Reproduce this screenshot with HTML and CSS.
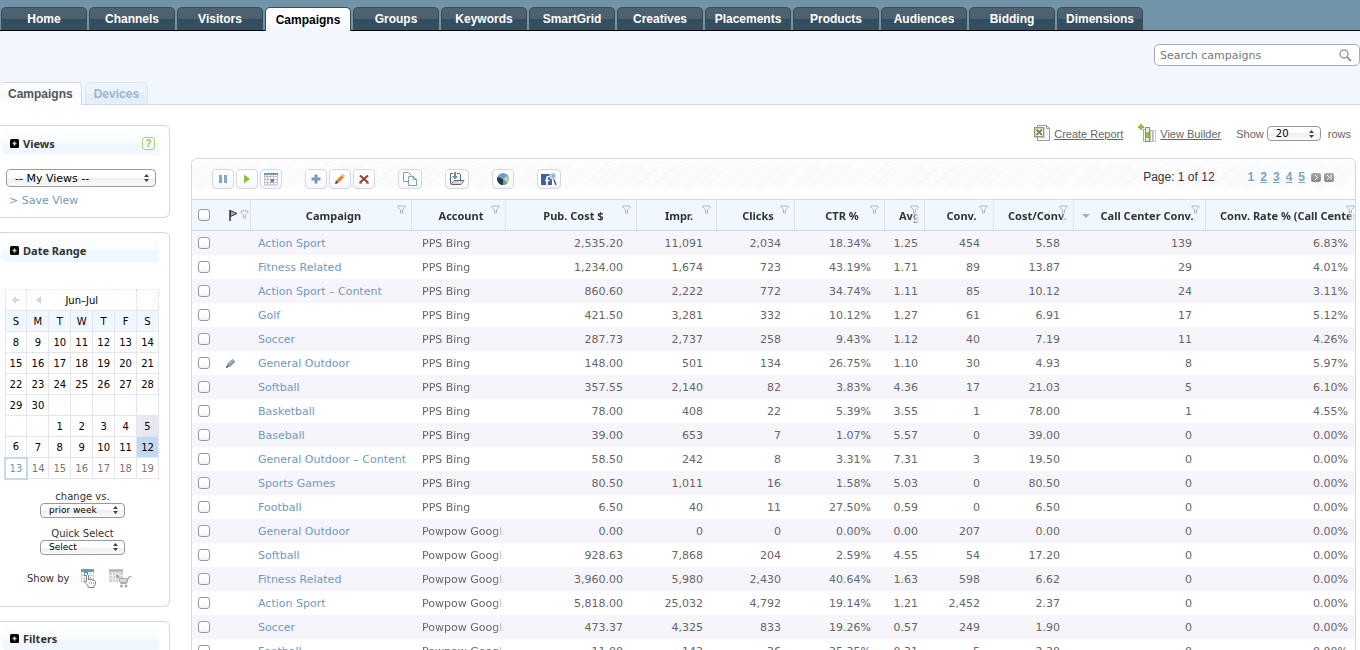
FILE: index.html
```html
<!DOCTYPE html>
<html lang="en">
<head>
    <meta charset="UTF-8">
    <meta name="viewport" content="width=device-width, initial-scale=1.0">
    <title>Campaigns</title>
    <link rel="stylesheet" href="styles.css">
</head>
<body>

    <!-- shared icons -->
    <svg class="sprite" aria-hidden="true">
        <symbol id="funnel" viewBox="0 0 9 9">
            <path d="M1 1h7v1.200L5.500 4.800v3.200h-2V4.800L1 2.200z" fill="#f8faff" stroke="#a9b5cb"/>
        </symbol>
        <symbol id="toggle" viewBox="0 0 9 9">
            <rect width="9" height="9" rx="1.500" fill="#000"/>
            <path d="M4.500 2.500v4M2.500 4.500h4" stroke="#c3d69a" stroke-width="1.600"/>
        </symbol>
    </svg>

    <nav class="main-nav">
        <a href="#">Home</a>
        <a href="#">Channels</a>
        <a href="#">Visitors</a>
        <a href="#" class="active">Campaigns</a>
        <a href="#">Groups</a>
        <a href="#">Keywords</a>
        <a href="#">SmartGrid</a>
        <a href="#">Creatives</a>
        <a href="#">Placements</a>
        <a href="#">Products</a>
        <a href="#">Audiences</a>
        <a href="#">Bidding</a>
        <a href="#">Dimensions</a>
    </nav>

    <header class="sub-header">
        <form class="search">
            <input type="text" placeholder="Search campaigns" aria-label="Search campaigns">
            <button type="button" aria-label="Search">
                <svg width="13" height="13" viewBox="0 0 13 13"><circle cx="5" cy="5" r="4" fill="none" stroke="#999" stroke-width="1.400"/><path d="M8 8l4 4" stroke="#999" stroke-width="2"/></svg>
            </button>
        </form>
        <nav class="sub-nav">
            <a href="#" class="active">Campaigns</a>
            <a href="#">Devices</a>
        </nav>
    </header>

    <div class="layout">
        <aside class="sidebar">
            <section class="panel">
                <h2><svg width="9" height="9"><use href="#toggle"/></svg>Views
                    <button type="button" class="help" aria-label="Help">?</button>
                </h2>
                <div class="views-body">
                    <select class="views-select" aria-label="Views"><option>-- My Views --</option></select>
                    <a href="#">&gt; Save View</a>
                </div>
            </section>

            <section class="panel">
                <h2><svg width="9" height="9"><use href="#toggle"/></svg>Date Range</h2>
                <table class="calendar">
                    <thead>
                        <tr class="month">
                            <td><button type="button" aria-label="Previous year"><svg width="7" height="8" viewBox="0 0 7 8"><path d="M4 0v3h3v2H4v3L0 4z" fill="#c1daf0"/></svg></button></td>
                            <td><button type="button" aria-label="Previous month"><svg width="5" height="8" viewBox="0 0 5 8"><path d="M5 0v8L0 4z" fill="#c1daf0"/></svg></button></td>
                            <td colspan="3">Jun–Jul</td>
                            <td></td>
                            <td></td>
                        </tr>
                        <tr><th>S</th><th>M</th><th>T</th><th>W</th><th>T</th><th>F</th><th>S</th></tr>
                    </thead>
                    <tbody>
                        <tr><td>8</td><td>9</td><td>10</td><td>11</td><td>12</td><td>13</td><td>14</td></tr>
                        <tr><td>15</td><td>16</td><td>17</td><td>18</td><td>19</td><td>20</td><td>21</td></tr>
                        <tr><td>22</td><td>23</td><td>24</td><td>25</td><td>26</td><td>27</td><td>28</td></tr>
                        <tr><td>29</td><td>30</td><td></td><td></td><td></td><td></td><td></td></tr>
                        <tr><td></td><td></td><td>1</td><td>2</td><td>3</td><td>4</td><td class="prior">5</td></tr>
                        <tr><td>6</td><td>7</td><td>8</td><td>9</td><td>10</td><td>11</td><td class="selected">12</td></tr>
                        <tr class="future"><td class="today">13</td><td>14</td><td>15</td><td>16</td><td>17</td><td>18</td><td>19</td></tr>
                    </tbody>
                </table>
                <div class="range-field">
                    <label for="compare">change vs.</label>
                    <select id="compare"><option>prior week</option></select>
                </div>
                <div class="range-field">
                    <label for="quick">Quick Select</label>
                    <select id="quick"><option>Select</option></select>
                </div>
                <div class="show-by">
                    <span>Show by</span>
                    <button type="button" aria-label="Show by click date">
                        <svg width="16" height="19" viewBox="0 0 16 19">
                            <rect x="0" y="0" width="13" height="3" fill="#7199b5"/>
                            <path d="M.5 3v10h12V3M.5 6.500h12M.5 9.500h12M3.500 3v10M6.500 3v10M9.500 3v10" fill="none" stroke="#cfd2e0"/>
                            <rect x="3.500" y="3.500" width="3" height="3" fill="#fff" stroke="#5c8db0"/>
                            <path d="M5.500 6.500c0-1.300 2-1.300 2 0V11l1-.8 1.300.6 1.200-.2 1 .8 1.500 0 1 1v2.600l-1.500 2v1.500H7.500L6.500 16 3.500 13c-.4-1 .6-1.500 1.300-.9l.7.7z" fill="#fff" stroke="#777" stroke-width=".9"/>
                            <path d="M8.500 13v2M10.500 13v2M12.500 13v2" stroke="#999" stroke-width=".8"/>
                        </svg>
                    </button>
                    <button type="button" aria-label="Show by purchase date">
                        <svg width="23" height="19" viewBox="0 0 23 19">
                            <rect x="0" y="0" width="14" height="3" fill="#bbb"/>
                            <rect x="0" y="3" width="14" height="10" fill="#d3d3de"/>
                            <path d="M0 6.500h14M0 9.500h14M3.500 3v10M6.500 3v10M9.500 3v10" stroke="#eeeef4"/>
                            <rect x="7" y="6" width="3" height="3" fill="#a5a5a8"/>
                            <path d="M22.500 7.500h-2.500l-2.500 7h-6M10 9.500h9l-1.500 4h-6.300z" fill="#d5d5de" stroke="#aaa"/>
                            <circle cx="12.500" cy="17" r="1.500" fill="#aaa"/><circle cx="17" cy="17" r="1.500" fill="#aaa"/>
                        </svg>
                    </button>
                </div>
            </section>

            <section class="panel">
                <h2><svg width="9" height="9"><use href="#toggle"/></svg>Filters</h2>
            </section>
        </aside>

        <main class="content">
            <div class="actions">
                <a href="#">
                    <svg width="16" height="17" viewBox="0 0 16 17">
                        <path d="M3.500.5h9l3 3v12h-12z" fill="#fff" stroke="#999"/><path d="M12.500.5v3h3" fill="none" stroke="#999"/>
                        <path d="M12 6h2M12 8h2M12 10h2M6 13h8" stroke="#dcdce6"/>
                        <rect x=".7" y="2.700" width="9" height="9" fill="#fff" stroke="#8aa06c" stroke-width="1.400"/>
                        <path d="M2.500 4.500l5.500 5.500M8 4.500L2.500 10" stroke="#6f8a55" stroke-width="1.800"/>
                    </svg><span>Create Report</span>
                </a>
                <a href="#">
                    <svg width="18" height="19" viewBox="0 0 18 19">
                        <path d="M3 0v6M0 3h6" stroke="#8fc043" stroke-width="2.400"/>
                        <rect x="5.500" y="5.500" width="2" height="12" fill="#fff" stroke="#aaa"/>
                        <rect x="7.500" y="3.500" width="4" height="14" fill="#e6edda" stroke="#8b9579"/>
                        <rect x="8" y="8" width="3" height="6" fill="#8fc043"/>
                        <rect x="12.500" y="6.500" width="2" height="11" fill="#fff" stroke="#bbb"/>
                        <rect x="15.500" y="6.500" width="2" height="11" fill="#fff" stroke="#c8c8d4"/>
                    </svg><span>View Builder</span>
                </a>
                <div class="row-count">
                    <label for="rows">Show</label>
                    <select id="rows"><option>20</option></select>
                    <span>rows</span>
                </div>
            </div>

            <div class="grid">
                <div class="toolbar">
                    <div class="tool-group">
                        <button type="button" aria-label="Pause"><svg width="14" height="14" viewBox="0 0 14 14"><path d="M3 3h3v8H3zM8 3h3v8H8z" fill="#7faac9"/></svg></button>
                        <button type="button" aria-label="Activate"><svg width="14" height="14" viewBox="0 0 14 14"><path d="M4 2.500v9L10 7z" fill="#8fc043"/></svg></button>
                        <button type="button" aria-label="Schedule"><svg width="14" height="14" viewBox="0 0 14 14"><path d="M.5 2v11h13V2M.5 4.500h13M.5 7.500h13M.5 10.500h13M3.500 2v11M6.500 2v11M9.500 2v11" fill="none" stroke="#bfbfca"/><path d="M0 1h14v2H0z" fill="#7199b5"/><path d="M7 7h3v3H7z" fill="#4c8dbd"/></svg></button>
                    </div>
                    <div class="tool-group">
                        <button type="button" aria-label="Add"><svg width="14" height="14" viewBox="0 0 14 14"><path d="M7 2.500v9M2.500 7h9" stroke="#7199b9" stroke-width="3"/></svg></button>
                        <button type="button" aria-label="Edit"><svg width="14" height="14" viewBox="0 0 14 14"><path d="M2 12l1-3.500 2.500 2.500z" fill="#333"/><path d="M3 8.500L8.500 3 11 5.500 5.500 11z" fill="#f2913d"/><path d="M5 9.500L10 4.500" stroke="#c7622a"/><path d="M8.500 3L10 1.500 12.500 4 11 5.500z" fill="#d4cbd0"/></svg></button>
                        <button type="button" aria-label="Delete"><svg width="14" height="14" viewBox="0 0 14 14"><path d="M3 3.500l8 7M11 3.500l-8 7" stroke="#94452c" stroke-width="2.200"/><path d="M2 11h3M9 11h3" stroke="#94452c"/></svg></button>
                    </div>
                    <div class="tool-group">
                        <button type="button" aria-label="Copy"><svg width="16" height="14" viewBox="0 0 16 14"><path d="M1.500.500h5l3 3v6h-8z" fill="#fff" stroke="#7ba3c0"/><path d="M6.500 4.500h5l3 3v6h-8z" fill="#fff" stroke="#7ba3c0"/><path d="M11.500 4.500v3h3" fill="none" stroke="#7ba3c0"/></svg></button>
                    </div>
                    <div class="tool-group">
                        <button type="button" aria-label="Import"><svg width="16" height="14" viewBox="0 0 16 14"><path d="M4 1.500H1.500v10l1 1h9.500l3-4H5l-3 4M8 1.500h2.500l1 1.500v5" fill="none" stroke="#666"/><path d="M5 9h9l-2 3H3z" fill="#d5d5db"/><path d="M6 0v5" stroke="#5c94b8" stroke-width="2"/><path d="M3 4h6L6 7.500z" fill="#5c94b8"/></svg></button>
                    </div>
                    <div class="tool-group">
                        <button type="button" aria-label="Chart"><svg width="14" height="14" viewBox="0 0 14 14"><circle cx="7" cy="7" r="6" fill="#6d9fc4"/><path d="M7 7L1.500 5A6 6 0 0 0 7 13z" fill="#243d4c"/><path d="M7 7v6a6 6 0 0 0 6-6L11 4z" fill="#c0cfa0"/><path d="M7 7v6a6 6 0 0 0 4.500-2z" fill="#6d9c87"/></svg></button>
                    </div>
                    <div class="tool-group">
                        <button type="button" aria-label="Publish"><svg width="16" height="14" viewBox="0 0 16 14"><path d="M0 2h11v11H0z" fill="#43609c"/><path d="M8.500 4.500H7.300C6.300 4.500 6 5 6 6v7M4 8.500h4.500" fill="none" stroke="#fff" stroke-width="1.700"/><path d="M12 5l3 8" stroke="#555" stroke-width="1.400"/><circle cx="12" cy="4" r="3.500" fill="#e6f0f9"/><path d="M12 1v6M9.400 2.500l5.200 3M9.400 5.500l5.200-3" stroke="#78a5c9"/></svg></button>
                    </div>
                    <div class="pager">
                        <span class="page-label">Page: 1 of 12</span>
                        <b>1</b>
                        <a href="#">2</a>
                        <a href="#">3</a>
                        <a href="#">4</a>
                        <a href="#">5</a>
                        <button type="button" aria-label="Next page"><svg width="10" height="9" viewBox="0 0 10 9"><path d="M4 2l2.500 2.500L4 7" fill="none" stroke="#fff"/></svg></button>
                        <button type="button" aria-label="Last page"><svg width="10" height="9" viewBox="0 0 10 9"><path d="M3 2l2.500 2.500L3 7M7 2v5" fill="none" stroke="#fff"/></svg></button>
                    </div>
                </div>

                <table class="data">
                    <colgroup>
                        <col class="w-check"><col class="w-flag"><col class="w-name"><col class="w-account"><col class="w-cost"><col class="w-impr"><col class="w-clicks"><col class="w-ctr"><col class="w-avg"><col class="w-conv"><col class="w-cpc"><col class="w-calls"><col>
                    </colgroup>
                    <thead>
                        <tr>
                            <th class="check"><input type="checkbox" aria-label="Select all"></th>
                            <th class="flag"><svg width="9" height="12" viewBox="0 0 9 12"><path d="M1 1v11" stroke="#222" stroke-width="1.400"/><path d="M1.500 1.500L8 4.500 1.500 7.500z" fill="#9bb0c0" stroke="#333"/></svg><svg width="9" height="9"><use href="#funnel"/></svg></th>
                            <th><div>Campaign</div><svg class="funnel"><use href="#funnel"/></svg></th>
                            <th><div>Account</div><svg class="funnel"><use href="#funnel"/></svg></th>
                            <th><div>Pub. Cost $</div><svg class="funnel"><use href="#funnel"/></svg></th>
                            <th><div>Impr.</div><svg class="funnel"><use href="#funnel"/></svg></th>
                            <th><div>Clicks</div><svg class="funnel"><use href="#funnel"/></svg></th>
                            <th><div>CTR %</div><svg class="funnel"><use href="#funnel"/></svg></th>
                            <th class="clipped"><div>Avg.</div><svg class="funnel"><use href="#funnel"/></svg></th>
                            <th><div>Conv.</div><svg class="funnel"><use href="#funnel"/></svg></th>
                            <th class="clipped"><div>Cost/Conv.</div><svg class="funnel"><use href="#funnel"/></svg></th>
                            <th class="sorted"><div>Call Center Conv.</div><svg class="funnel"><use href="#funnel"/></svg></th>
                            <th class="clipped last"><div>Conv. Rate % (Call Center)</div><svg class="funnel"><use href="#funnel"/></svg></th>
                        </tr>
                    </thead>
                    <tbody id="campaignRows"></tbody>
                </table>
            </div>
        </main>
    </div>

    <script>
        // name, account, cost, impr, clicks, ctr, avg cpc, conv, cost/conv, call conv, conv rate
        const campaigns = [
            ['Action Sport', 'PPS Bing', '2,535.20', '11,091', '2,034', '18.34%', '1.25', '454', '5.58', '139', '6.83%'],
            ['Fitness Related', 'PPS Bing', '1,234.00', '1,674', '723', '43.19%', '1.71', '89', '13.87', '29', '4.01%'],
            ['Action Sport – Content', 'PPS Bing', '860.60', '2,222', '772', '34.74%', '1.11', '85', '10.12', '24', '3.11%'],
            ['Golf', 'PPS Bing', '421.50', '3,281', '332', '10.12%', '1.27', '61', '6.91', '17', '5.12%'],
            ['Soccer', 'PPS Bing', '287.73', '2,737', '258', '9.43%', '1.12', '40', '7.19', '11', '4.26%'],
            ['General Outdoor', 'PPS Bing', '148.00', '501', '134', '26.75%', '1.10', '30', '4.93', '8', '5.97%'],
            ['Softball', 'PPS Bing', '357.55', '2,140', '82', '3.83%', '4.36', '17', '21.03', '5', '6.10%'],
            ['Basketball', 'PPS Bing', '78.00', '408', '22', '5.39%', '3.55', '1', '78.00', '1', '4.55%'],
            ['Baseball', 'PPS Bing', '39.00', '653', '7', '1.07%', '5.57', '0', '39.00', '0', '0.00%'],
            ['General Outdoor – Content', 'PPS Bing', '58.50', '242', '8', '3.31%', '7.31', '3', '19.50', '0', '0.00%'],
            ['Sports Games', 'PPS Bing', '80.50', '1,011', '16', '1.58%', '5.03', '0', '80.50', '0', '0.00%'],
            ['Football', 'PPS Bing', '6.50', '40', '11', '27.50%', '0.59', '0', '6.50', '0', '0.00%'],
            ['General Outdoor', 'Powpow Google', '0.00', '0', '0', '0.00%', '0.00', '207', '0.00', '0', '0.00%'],
            ['Softball', 'Powpow Google', '928.63', '7,868', '204', '2.59%', '4.55', '54', '17.20', '0', '0.00%'],
            ['Fitness Related', 'Powpow Google', '3,960.00', '5,980', '2,430', '40.64%', '1.63', '598', '6.62', '0', '0.00%'],
            ['Action Sport', 'Powpow Google', '5,818.00', '25,032', '4,792', '19.14%', '1.21', '2,452', '2.37', '0', '0.00%'],
            ['Soccer', 'Powpow Google', '473.37', '4,325', '833', '19.26%', '0.57', '249', '1.90', '0', '0.00%'],
            ['Football', 'Powpow Google', '11.00', '142', '36', '25.35%', '0.31', '5', '2.20', '0', '0.00%']
        ];
        const edited = 5;
        const pencil = '<svg width="10" height="10" viewBox="0 0 10 10"><path d="M.5 9.500l1-4L6.500 1l3 2.500L4.500 8.500z" fill="#8296a8"/><path d="M2.500 6.500L7 2.500" stroke="#bccbd8"/><path d="M0 10l.8-2.500 1.700 1.500z" fill="#333"/></svg>';

        document.getElementById('campaignRows').innerHTML = campaigns.map((row, i) => {
            const [name, account, ...numbers] = row;
            return `
                <tr>
                    <td class="check"><input type="checkbox" aria-label="Select ${name}"></td>
                    <td class="flag">${i === edited ? pencil : ''}</td>
                    <td class="name"><a href="#">${name}</a></td>
                    <td class="account"><div>${account}</div></td>
                    ${numbers.map(n => `<td class="num">${n}</td>`).join('')}
                </tr>
            `;
        }).join('');
    </script>

</body>
</html>
```
FILE: styles.css
```css
* {
    box-sizing: border-box;
}
body {
    margin: 0;
    height: 100vh;
    overflow: hidden;
    background-color: #fff;
    color: #666;
    font-family: "DejaVu Sans", sans-serif;
    font-size: 11px;
}
a {
    color: #7199bd;
    text-decoration: none;
}
button {
    padding: 0;
    border: none;
    background: none;
    cursor: pointer;
}
svg {
    display: block;
    flex-shrink: 0;
}
.sprite {
    position: absolute;
    width: 0;
    height: 0;
}

/* selects */
select {
    appearance: none;
    height: 15px;
    padding: 0 8px;
    border: 1px solid #999;
    border-radius: 4px;
    background: url("data:image/svg+xml,%3Csvg xmlns='http://www.w3.org/2000/svg' width='5' height='8'%3E%3Cpath d='M0 3L2.500 0 5 3zM0 5h5L2.500 8z' fill='%23444'/%3E%3C/svg%3E") no-repeat right 6px center, linear-gradient(#fff 50%, #efeff4 50%, #fafafc);
    color: #000;
    font-family: inherit;
    font-size: 9px;
}

/* top navigation */
.main-nav {
    display: flex;
    gap: 2px;
    height: 31px;
    padding: 7px 0 0 1px;
    border-bottom: 1px solid #000;
    background-color: #7093a8;
    font: bold 12px "Liberation Sans", Arial, sans-serif;
}
.main-nav a {
    width: 86px;
    height: 23px;
    border: 1px solid #38515f;
    border-bottom: none;
    border-radius: 5px 5px 0 0;
    background: linear-gradient(#4f6271, #4b606e 50%, #354e5e 50%, #364f5e);
    color: #fff;
    line-height: 22px;
    text-align: center;
}
.main-nav a.active {
    height: 24px;
    background: linear-gradient(#fff 50%, #f1f6ff);
    color: #000;
    line-height: 24px;
}

/* light strip under the navigation */
.sub-header {
    display: flex;
    flex-direction: column;
    justify-content: space-between;
    height: 74px;
    padding-top: 13px;
    border-bottom: 1px solid #d6d6e3;
    background-color: #f1f6ff;
}
.search {
    display: flex;
    align-items: center;
    align-self: flex-end;
    width: 206px;
    height: 22px;
    padding: 0 7px 0 5px;
    border: 1px solid #aaaab4;
    border-radius: 5px;
    background-color: #fff;
}
.search input {
    flex: 1;
    min-width: 0;
    padding: 0;
    border: none;
    outline: none;
    font: 11px "DejaVu Sans", sans-serif;
}
.search input::placeholder {
    color: #777;
}
.sub-nav {
    display: flex;
    gap: 3px;
    margin-bottom: -1px;
    font: bold 12px "Liberation Sans", Arial, sans-serif;
}
.sub-nav a {
    height: 22px;
    padding: 0 8px;
    border: 1px solid #dfe6f3;
    border-bottom: none;
    border-radius: 5px 5px 0 0;
    background: linear-gradient(#ecf4fd 50%, #e2effc 50%);
    color: #a3b5c8;
    line-height: 22px;
}
.sub-nav a.active {
    height: 23px;
    border-color: #d6d6e3;
    border-left: none;
    background: linear-gradient(#fff, #f8fafe 50%, #fff);
    color: #555;
}

/* page columns */
.layout {
    display: flex;
    gap: 21px;
    padding-right: 4px;
}
.sidebar {
    display: flex;
    flex-direction: column;
    gap: 14px;
    width: 170px;
    flex-shrink: 0;
    padding-top: 20px;
}
.content {
    flex: 1;
    min-width: 0;
}

/* sidebar panels */
.panel {
    padding: 5px 10px 18px 2px;
    border: 1px solid #d6d6e3;
    border-left: none;
    border-radius: 0 6px 6px 0;
}
.panel h2 {
    display: flex;
    align-items: center;
    gap: 4px;
    height: 24px;
    margin: 0;
    padding: 0 4px 0 8px;
    border-radius: 6px 0 0 6px;
    background: linear-gradient(#fbfdff 50%, #f0f7ff 50%);
    color: #333;
    font: bold 11px "Noto Sans", sans-serif;
}
.help {
    width: 13px;
    height: 13px;
    margin-left: auto;
    border: 1px solid #b2cc84;
    border-radius: 3px;
    color: #a3c26c;
    font: bold 10px "Liberation Sans", Arial, sans-serif;
    line-height: 11px;
}
.views-body {
    display: flex;
    flex-direction: column;
    align-items: flex-start;
    gap: 6px;
    padding: 14px 0 0 4px;
}
.views-body a {
    padding-left: 3px;
    line-height: 16px;
}
.panel:first-child {
    padding-bottom: 8px;
}
.views-select {
    width: 150px;
    height: 18px;
    font-size: 11px;
}

/* calendar */
.calendar {
    width: 155px;
    margin: 27px 0 11px 2px;
    border-collapse: collapse;
    table-layout: fixed;
    color: #000;
    font-size: 10px;
    text-align: center;
}
.calendar td, .calendar th {
    height: 21px;
    padding: 0;
    border: 1px solid #e5e5f0;
    font-weight: normal;
}
.calendar th {
    background-color: #f0f7ff;
}
.calendar .month td {
    border-style: dotted;
    border-left: none;
    border-right: none;
}
.calendar .month td:first-child, .calendar .month td:last-child {
    border-left: 1px dotted #d6d6e3;
    border-right: 1px dotted #d6d6e3;
}
.calendar button svg {
    margin: 0 auto;
}
.calendar .prior {
    background-color: #e8e8f2;
}
.calendar .selected {
    background-color: #c1daf0;
}
.calendar .future td {
    color: #777;
}
.calendar .future .today {
    border: 2px solid #c1daf0;
    color: #7199bd;
}
.range-field {
    display: flex;
    flex-direction: column;
    align-items: center;
    margin: 0 0 10px 4px;
    color: #333;
    font-size: 10px;
    line-height: 12px;
}
.range-field select {
    width: 85px;
}
.show-by {
    display: flex;
    align-items: center;
    gap: 12px;
    margin-top: 14px;
    padding-left: 25px;
    color: #333;
    font-size: 10px;
}

/* links above the grid */
.actions {
    display: flex;
    align-items: center;
    justify-content: flex-end;
    gap: 15px;
    height: 53px;
    padding: 4px 5px 0 0;
    font: 11px "Liberation Sans", Arial, sans-serif;
}
.actions a {
    display: flex;
    align-items: center;
    gap: 4px;
    color: #666;
}
.actions a span {
    text-decoration: underline;
}
.row-count {
    display: flex;
    align-items: center;
    gap: 3px;
}
.row-count select {
    width: 54px;
    margin-right: 4px;
    font: 10px "DejaVu Sans", sans-serif;
}

/* grid */
.grid {
    overflow: hidden;
    border: 1px solid #d6d6e3;
    border-radius: 6px 6px 0 0;
}
.toolbar {
    display: flex;
    align-items: center;
    gap: 23px;
    height: 40px;
    padding: 0 21px 0 20px;
    background: repeating-linear-gradient(135deg, #f3f6fb 0 1px, #fff 1px 3px) no-repeat 0 3px / 100% 26px;
}
.tool-group {
    display: flex;
    gap: 2px;
}
.tool-group button {
    display: flex;
    align-items: center;
    justify-content: center;
    min-width: 22px;
    height: 20px;
    padding: 0 3px;
    border: 1px solid #d6d6e3;
    border-radius: 4px;
    background: linear-gradient(#fff 50%, #f6f5fb);
}
.pager {
    display: flex;
    align-items: center;
    gap: 6px;
    margin: -4px 0 0 auto;
    color: #7ba3c5;
    font: bold 12px "Liberation Sans", Arial, sans-serif;
}
.pager a {
    color: #7ba3c5;
    text-decoration: underline;
}
.pager button {
    border-radius: 2px;
    background: linear-gradient(#aaa, #888);
}
.pager button + button {
    margin-left: -3px;
}
.page-label {
    margin-right: 27px;
    color: #333;
    font-weight: normal;
}

.data {
    width: 100%;
    border-collapse: separate;
    border-spacing: 0;
    table-layout: fixed;
}
.w-check { width: 31px; }
.w-flag { width: 28px; }
.w-name { width: 161px; }
.w-account { width: 94px; }
.w-cost { width: 131px; }
.w-impr { width: 80px; }
.w-clicks { width: 78px; }
.w-ctr { width: 90px; }
.w-avg { width: 40px; }
.w-conv { width: 69px; }
.w-cpc { width: 80px; }
.w-calls { width: 132px; }

.data th {
    position: relative;
    height: 32px;
    padding: 0 6px 0 10px;
    border: solid #d6d6e3;
    border-width: 1px 0;
    background: linear-gradient(#dfe3ee, #dfe3ee) no-repeat right 0 / 1px 100%, #f0f7ff;
    color: #333;
    font: bold 11px "Noto Sans", sans-serif;
    white-space: nowrap;
}
.data th:first-child {
    background: #f0f7ff;
}
.data th div, .account div {
    overflow: hidden;
    mask-image: linear-gradient(to left, transparent, #000 8px);
}
.data th.clipped {
    padding-left: 14px;
    text-align: left;
}
.data th.last {
    padding-right: 0;
    background: #f0f7ff;
}
.data th.sorted {
    padding-left: 20px;
}
.data th.sorted::before {
    content: "";
    position: absolute;
    top: 14px;
    left: 8px;
    border: 4px solid transparent;
    border-top: 4px solid #9db1c6;
    border-bottom: none;
}
.data .funnel {
    position: absolute;
    top: 5px;
    right: 6px;
    width: 9px;
    height: 9px;
}
.data th.last .funnel {
    right: 0;
}
.data td {
    height: 24px;
    padding: 0;
    white-space: nowrap;
}
.data tbody tr:nth-child(odd) {
    background-color: #f6f5fb;
}
.data td.check, .data th.check {
    padding: 0 0 0 6px;
}
.data input {
    display: block;
    appearance: none;
    width: 12px;
    height: 12px;
    margin: 0;
    border: 1px solid #999;
    border-radius: 3px;
    background: linear-gradient(#fff 50%, #f0f0f5);
}
.data th.flag {
    padding: 0 0 4px 6px;
}
.data td.flag {
    padding-left: 3px;
}
.data th.flag svg {
    display: inline-block;
    margin-right: 2px;
    vertical-align: middle;
}
.data .name {
    padding-left: 7px;
}
.data .account {
    padding: 0 2px 0 10px;
    overflow: hidden;
}
.data .num {
    padding-right: 14px;
    text-align: right;
}
.data .num:nth-child(9), .data .num:last-child {
    padding-right: 7px;
}
```
